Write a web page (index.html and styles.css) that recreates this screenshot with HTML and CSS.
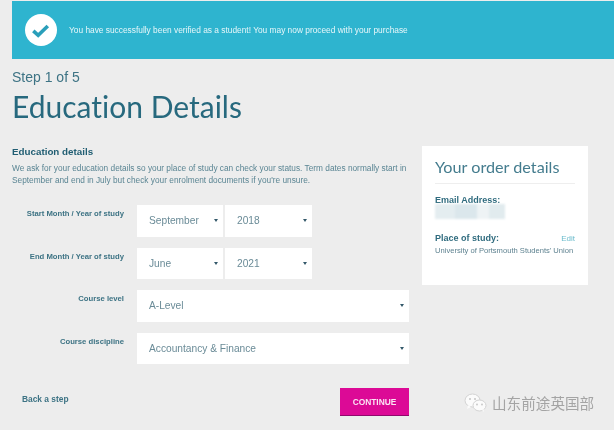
FILE: index.html
```html
<!DOCTYPE html>
<html lang="en">
<head>
    <meta charset="UTF-8">
    <meta name="viewport" content="width=device-width, initial-scale=1.0">
    <title>Education Details</title>
    <link rel="stylesheet" href="styles.css">
</head>
<body>

    <!-- Verified banner -->
    <div class="banner">
        <div class="banner-icon">
            <svg width="32" height="32" viewBox="0 0 32 32">
                <circle cx="16" cy="16" r="16" fill="#fff"/>
                <path d="M8.300 16.800l4.900 4.500 9.600-9.300" fill="none" stroke="#2a9fba" stroke-width="3.600"/>
            </svg>
        </div>
        <p>You have successfully been verified as a student! You may now proceed with your purchase</p>
    </div>

    <div class="page-head">
        <div class="step">Step 1 of 5</div>
        <h1>Education Details</h1>
    </div>

    <div class="content">
        <form class="edu-form">
            <h2>Education details</h2>
            <p class="intro">We ask for your education details so your place of study can check your status. Term dates normally start in September and end in July but check your enrolment documents if you're unsure.</p>

            <div class="form-row">
                <label>Start Month / Year of study</label>
                <div class="fields">
                    <div class="select month"><span>September</span><i></i></div>
                    <div class="select year"><span>2018</span><i></i></div>
                </div>
            </div>
            <div class="form-row">
                <label>End Month / Year of study</label>
                <div class="fields">
                    <div class="select month"><span>June</span><i></i></div>
                    <div class="select year"><span>2021</span><i></i></div>
                </div>
            </div>
            <div class="form-row">
                <label>Course level</label>
                <div class="fields">
                    <div class="select wide"><span>A-Level</span><i></i></div>
                </div>
            </div>
            <div class="form-row">
                <label>Course discipline</label>
                <div class="fields">
                    <div class="select wide"><span>Accountancy &amp; Finance</span><i></i></div>
                </div>
            </div>

            <div class="form-actions">
                <a class="back-link">Back a step</a>
                <button type="button" class="continue">CONTINUE</button>
            </div>
        </form>

        <aside class="order">
            <h3>Your order details</h3>
            <div class="order-label email-label">Email Address:</div>
            <div class="redacted">
                <span class="p1"></span><span class="p2"></span><span class="p3"></span><span class="p4"></span>
            </div>
            <div class="place-head">
                <div class="order-label">Place of study:</div>
                <a class="edit">Edit</a>
            </div>
            <div class="place">University of Portsmouth Students' Union</div>
        </aside>
    </div>

    <!-- Watermark -->
    <div class="watermark">
        <svg width="23" height="20" viewBox="0 0 23 20">
            <ellipse cx="8.500" cy="7.500" rx="7.500" ry="6.500" fill="#fbfbfb" stroke="#d2d2d2"/>
            <path d="M4 12l-1 4 4-2z" fill="#fbfbfb"/>
            <ellipse cx="15.500" cy="12.500" rx="6.500" ry="5.500" fill="#fbfbfb" stroke="#d2d2d2"/>
            <path d="M18 17l2 2-.5-3.500z" fill="#fbfbfb"/>
            <circle cx="6" cy="6" r="1" fill="#c4c4c4"/>
            <circle cx="11" cy="6" r="1" fill="#c4c4c4"/>
            <circle cx="13" cy="11.500" r=".9" fill="#c4c4c4"/>
            <circle cx="18" cy="11.500" r=".9" fill="#c4c4c4"/>
        </svg>
        <span>山东前途英国部</span>
    </div>

</body>
</html>
```

FILE: styles.css
```css
/* Page */
html {
    background-color: #ededed;
}
body {
    margin: 0;
    height: 430px;
    overflow: hidden;
    position: relative;
    color: #2f6b7e;
    font-family: "Liberation Sans", Arial, sans-serif;
    filter: blur(0.35px);
}

/* Banner */
.banner {
    display: flex;
    align-items: center;
    height: 58px;
    margin: 1px 0 0 12px;
    padding-left: 13px;
    background-color: #2eb4cf;
}
.banner-icon {
    display: flex;
    margin-right: 12px;
}
.banner p {
    margin: 0;
    color: #e6f6f9;
    font-size: 8.350px;
}

/* Heading */
.page-head {
    padding: 10px 0 0 12px;
}
.step {
    font-size: 14px;
    line-height: 17px;
    color: #3d7384;
}
h1 {
    margin: 0;
    font-family: "Lato", sans-serif;
    font-variant-ligatures: none;
    font-size: 30px;
    line-height: 40px;
    font-weight: 400;
    color: #27697e;
}

/* Two columns */
.content {
    display: flex;
    align-items: flex-start;
    padding: 19px 0 0 12px;
}
.edu-form {
    width: 397px;
    margin-right: 13px;
}
.edu-form h2 {
    margin: 0;
    font-size: 9.800px;
    line-height: 13px;
    color: #215e73;
}
.intro {
    margin: 4px 0 0;
    font-size: 8.300px;
    line-height: 12px;
    color: #5a8593;
}

/* Form rows */
.form-row {
    display: flex;
    margin-top: 11px;
}
.intro + .form-row {
    margin-top: 19px;
}
.form-row label {
    width: 112px;
    margin-right: 13px;
    padding-top: 4px;
    text-align: right;
    font-size: 7.700px;
    line-height: 10px;
    font-weight: bold;
    color: #3d7384;
}
.fields {
    display: flex;
    flex: 1;
    gap: 2px;
}
.select {
    display: flex;
    align-items: center;
    justify-content: space-between;
    height: 31.500px;
    box-sizing: border-box;
    padding: 0 5px 0 12px;
    background-color: #fff;
    font-size: 10.200px;
    color: #6a8b97;
}
.month {
    width: 86px;
}
.year {
    width: 87px;
}
.wide {
    flex: 1;
}
.select i {
    width: 0;
    height: 0;
    border-left: 2px solid transparent;
    border-right: 2px solid transparent;
    border-top: 3px solid #33586a;
}

/* Bottom buttons */
.form-actions {
    display: flex;
    align-items: flex-start;
    justify-content: space-between;
    margin-top: 24px;
    padding-left: 10px;
}
.back-link {
    margin-top: 6px;
    font-size: 8.400px;
    line-height: 11px;
    font-weight: bold;
    color: #3d7384;
}
.continue {
    width: 69px;
    height: 28px;
    padding: 0;
    border: none;
    border-bottom: 1px solid #8f0a6c;
    background-color: #dc0a96;
    color: #fbe4f3;
    font-family: inherit;
    font-size: 8.400px;
    font-weight: bold;
}

/* Order box */
.order {
    width: 166px;
    height: 139px;
    box-sizing: border-box;
    margin-top: 1px;
    padding: 11px 13px 0;
    background-color: #fff;
}
.order h3 {
    margin: 0 0 11px;
    padding-bottom: 7px;
    border-bottom: 1px solid #eee;
    font-family: "Lato", sans-serif;
    font-size: 16.200px;
    line-height: 19px;
    font-weight: 400;
    color: #447c8e;
}
.order-label {
    font-size: 9px;
    line-height: 11px;
    font-weight: bold;
    color: #2f6b7e;
}
.email-label {
    margin-bottom: -2px;
}
.redacted {
    display: flex;
    height: 15px;
    margin-bottom: 14px;
    filter: blur(1px);
}
.redacted span {
    display: block;
}
.p1 { width: 20px; background-color: #e4edf0; }
.p2 { width: 22px; background-color: #dbe7ec; }
.p3 { width: 12px; background-color: #eef3f5; }
.p4 { width: 16px; background-color: #e1ebee; }
.place-head {
    display: flex;
    justify-content: space-between;
    align-items: baseline;
}
.edit {
    font-size: 8px;
    color: #6cbccc;
}
.place {
    margin-top: 1px;
    font-size: 7.600px;
    line-height: 11px;
    color: #5e8290;
}

/* Watermark */
.watermark {
    position: absolute;
    left: 464px;
    top: 393px;
    display: flex;
    align-items: center;
    gap: 5px;
    color: #a4a4a4;
    font-family: "Noto Sans CJK SC", sans-serif;
    font-size: 14.600px;
    line-height: 20px;
}
```
